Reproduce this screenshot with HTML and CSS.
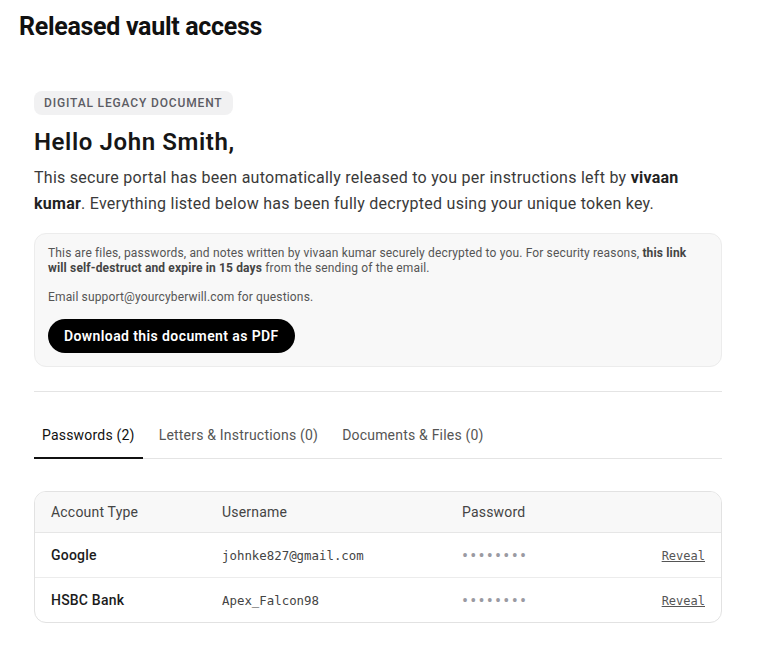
FILE: index.html
```html
<!DOCTYPE html>
<html lang="en">
<head>
    <meta charset="UTF-8">
    <meta name="viewport" content="width=device-width, initial-scale=1.0">
    <title>Released vault access</title>
    <link rel="stylesheet" href="styles.css">
</head>
<body>
    <h1 class="page-title">Released vault access</h1>
    <main class="doc">
        <span class="badge">Digital Legacy Document</span>
        <h2 class="hello">Hello John Smith,</h2>
        <p class="intro">This secure portal has been automatically released to you per instructions left by <b>vivaan kumar</b>. Everything listed below has been fully decrypted using your unique token key.</p>
        <div class="note">
            <p>This are files, passwords, and notes written by vivaan kumar securely decrypted to you. For security reasons, <b>this link will self-destruct and expire in 15 days</b> from the sending of the email.</p>
            <p>Email support@yourcyberwill.com for questions.</p>
            <button class="pdf-btn">Download this document as PDF</button>
        </div>
        <hr class="divider">
        <nav class="tabs">
            <a href="#" class="tab active">Passwords (2)</a>
            <a href="#" class="tab">Letters &amp; Instructions (0)</a>
            <a href="#" class="tab">Documents &amp; Files (0)</a>
        </nav>
        <div class="table-wrap">
            <table class="pw-table">
                <thead>
                    <tr>
                        <th class="c-type">Account Type</th>
                        <th class="c-user">Username</th>
                        <th class="c-pass">Password</th>
                        <th class="c-act"></th>
                    </tr>
                </thead>
                <tbody>
                    <tr>
                        <td class="acct">Google</td>
                        <td class="mono">johnke827@gmail.com</td>
                        <td class="dots">&bull;&bull;&bull;&bull;&bull;&bull;&bull;&bull;</td>
                        <td class="act"><a href="#" class="reveal">Reveal</a></td>
                    </tr>
                    <tr>
                        <td class="acct">HSBC Bank</td>
                        <td class="mono">Apex_Falcon98</td>
                        <td class="dots">&bull;&bull;&bull;&bull;&bull;&bull;&bull;&bull;</td>
                        <td class="act"><a href="#" class="reveal">Reveal</a></td>
                    </tr>
                </tbody>
            </table>
        </div>
    </main>
</body>
</html>
```

FILE: styles.css
```css
body {
    font-family: Roboto, "Noto Sans", sans-serif;
    margin: 0;
    padding: 0;
    color: #111;
    background: #fff;
}
.page-title {
    font-size: 25px;
    font-weight: 700;
    letter-spacing: -0.3px;
    margin: 0;
    padding: 12px 19px 0;
    line-height: 30px;
}
.doc {
    padding: 49px 41px 24px 34px;
}
.badge {
    display: inline-block;
    background: #f1f1f2;
    color: #5c5c64;
    font-size: 12px;
    font-weight: 500;
    text-transform: uppercase;
    letter-spacing: 0.85px;
    padding: 5px 10px;
    line-height: 14px;
    border-radius: 8px;
}
.hello {
    font-size: 24px;
    font-weight: 600;
    letter-spacing: 0.6px;
    margin: 12px 0 8px;
    line-height: 30px;
    color: #161616;
}
.intro {
    font-size: 16px;
    line-height: 26px;
    letter-spacing: 0.26px;
    color: #3a3a3a;
    margin: 0 0 16px;
}
.intro b {
    color: #222;
}
.note {
    background: #f8f8f8;
    border: 1px solid #ececec;
    border-radius: 12px;
    padding: 12px 13px 13px;
}
.note p {
    font-size: 12px;
    line-height: 15px;
    letter-spacing: 0.15px;
    color: #555;
    margin: 0 0 14px;
}
.note p b {
    color: #444;
}
.pdf-btn {
    display: block;
    background: #000;
    color: #fff;
    border: none;
    border-radius: 18px;
    font-family: Roboto, sans-serif;
    font-size: 14px;
    font-weight: 600;
    letter-spacing: 0.4px;
    padding: 0 16px;
    height: 34px;
}
.divider {
    border: none;
    border-top: 1px solid #e4e4e4;
    margin: 24px 0 0;
}
.tabs {
    display: flex;
    margin-top: 32px;
    border-bottom: 1px solid #e4e4e4;
}
.tab {
    font-size: 14px;
    letter-spacing: 0.2px;
    color: #555;
    text-decoration: none;
    padding: 3px 8px 14px;
    margin-right: 8px;
    border-bottom: 2px solid transparent;
    margin-bottom: -1px;
}
.tab.active {
    color: #111;
    border-bottom-color: #111;
}
.table-wrap {
    margin-top: 32px;
    border: 1px solid #e2e2e2;
    border-radius: 12px;
    overflow: hidden;
}
.pw-table {
    width: 100%;
    border-collapse: collapse;
}
.pw-table th {
    background: #f8f8f8;
    font-size: 14px;
    font-weight: 400;
    letter-spacing: 0.2px;
    color: #444;
    text-align: left;
    height: 40px;
    padding: 0;
    border-bottom: 1px solid #e6e6e6;
}
.pw-table td {
    height: 44px;
    padding: 0;
    font-size: 14px;
}
.pw-table tbody tr + tr td {
    border-top: 1px solid #ececec;
}
.c-type, .acct {
    padding-left: 16px !important;
    width: 171px;
}
.c-user {
    width: 240px;
}
.pw-table .acct {
    font-weight: 500;
    letter-spacing: 0.2px;
    color: #1c1c1c;
}
.pw-table .mono {
    font-family: "DejaVu Sans Mono", "Liberation Mono", monospace;
    font-size: 12.4px;
    color: #444;
}
.pw-table .dots {
    color: #9a9aa2;
    font-size: 18px;
    letter-spacing: 2.2px;
}
.act {
    text-align: right;
    padding-right: 16px !important;
}
.reveal {
    font-family: "DejaVu Sans Mono", "Liberation Mono", monospace;
    font-size: 12px;
    color: #555;
}
```
